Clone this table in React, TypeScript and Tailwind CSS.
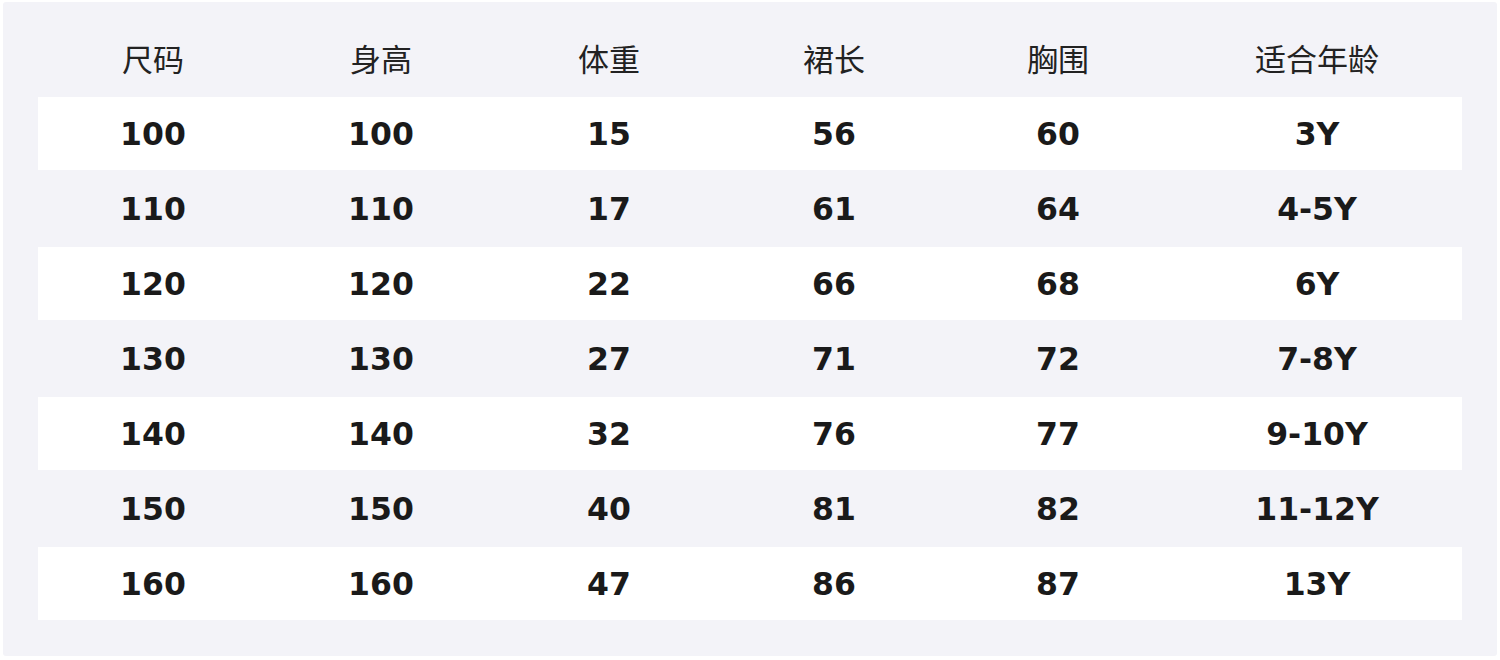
import React from 'react';

const headers = ['尺码', '身高', '体重', '裙长', '胸围', '适合年龄'];

const rows = [
    ['100', '100', '15', '56', '60', '3Y'],
    ['110', '110', '17', '61', '64', '4-5Y'],
    ['120', '120', '22', '66', '68', '6Y'],
    ['130', '130', '27', '71', '72', '7-8Y'],
    ['140', '140', '32', '76', '77', '9-10Y'],
    ['150', '150', '40', '81', '82', '11-12Y'],
    ['160', '160', '47', '86', '87', '13Y'],
];

const cols = 'grid grid-cols-[230px_226px_230px_220px_228px_1fr]';

const App = () => {
    return (
        <div className="w-[1500px] h-[660px] bg-white pt-[2px] pl-[3px] pr-[3px]">
            {/* Size chart panel */}
            <div className="h-[654px] bg-[#f3f3f8] rounded-[3px] px-[35px] pt-[20px]">
                {/* Header */}
                <div className={`${cols} h-[75px] items-center pb-[4px]`}>
                    {headers.map((h) => (
                        <div
                            key={h}
                            className="text-center text-[31px] text-[#222] font-['Noto_Sans_CJK_SC',sans-serif] leading-none"
                        >
                            {h}
                        </div>
                    ))}
                </div>

                {/* Rows */}
                <div className="flex flex-col gap-y-[2px]">
                    {rows.map((r, i) => (
                        <div
                            key={r[0]}
                            className={`${cols} h-[73px] items-center pt-[2px] ${i % 2 === 0 ? 'bg-white' : ''}`}
                        >
                            {r.map((v, j) => (
                                <div
                                    key={j}
                                    className="text-center text-[31.5px] font-bold text-[#1a1a1a] font-['DejaVu_Sans',sans-serif] leading-none"
                                >
                                    {v}
                                </div>
                            ))}
                        </div>
                    ))}
                </div>
            </div>
        </div>
    );
};

export default App;
